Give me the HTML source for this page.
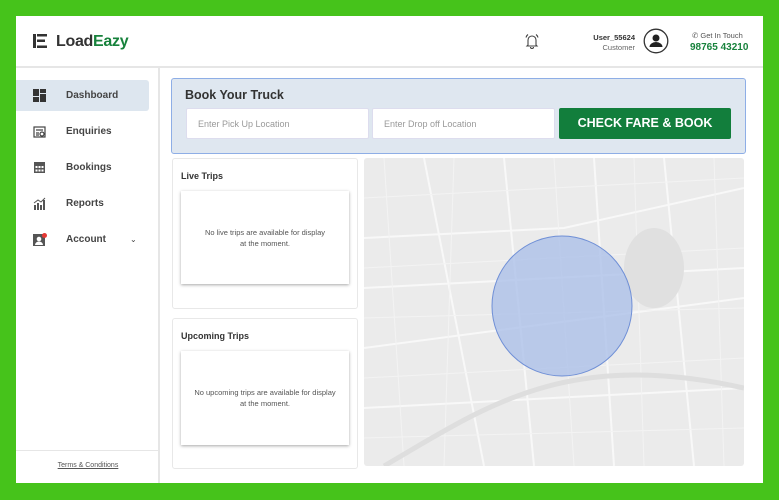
<!DOCTYPE html>
<html><head><meta charset="utf-8"><style>
*{margin:0;padding:0;box-sizing:border-box}
body{width:779px;height:500px;background:#46c31b;font-family:"Liberation Sans",Arial,sans-serif;position:relative;overflow:hidden}
.frame{position:absolute;left:16px;top:16px;width:747px;height:467px;background:#fff}
.hdr{position:absolute;left:0;top:0;width:747px;height:52px;border-bottom:2px solid #e6e6e6}
.side{position:absolute;left:0;top:52px;width:144px;height:415px;border-right:2px solid #e6e6e6}
.nav{position:absolute;left:0;width:133px;height:31px;display:flex;align-items:center;font-size:10px;font-weight:bold;color:#444}
.nav svg{position:absolute;left:17px}
.nav span{position:absolute;left:50px}
.abs{position:absolute}
.card{position:absolute;background:#fff;border:1px solid #e8e8e8;border-radius:3px}
.inner{position:absolute;background:#fff;box-shadow:0 1px 3px rgba(0,0,0,.35);font-size:7.5px;color:#555;text-align:center;line-height:11px;display:flex;align-items:center;justify-content:center}
</style></head><body>
<div class="frame">
 <div class="hdr">
  <svg class="abs" style="left:17px;top:18px" width="14" height="14" viewBox="0 0 14 14"><rect x="0" y="0" width="3" height="14" fill="#333"/><rect x="4" y="0" width="10" height="2.5" fill="#333"/><rect x="4" y="5.5" width="8" height="2.5" fill="#333"/><rect x="4" y="11.5" width="10" height="2.5" fill="#333"/></svg>
  <div class="abs" style="left:40px;top:17px;font-size:16px;font-weight:bold;color:#333;letter-spacing:-.3px">Load<span style="color:#17823c">Eazy</span></div>
  <svg class="abs" style="left:508px;top:17px" width="16" height="16" viewBox="0 0 16 16" fill="none" stroke="#444" stroke-width="1.1"><path d="M4 12V7a4 4 0 0 1 8 0v5l1 1H3z"/><path d="M6.5 14a1.5 1.5 0 0 0 3 0"/><path d="M2 4.5a5 5 0 0 1 2-3M14 4.5a5 5 0 0 0-2-3"/></svg>
  <div class="abs" style="right:128px;top:17px;font-size:7.5px;font-weight:bold;color:#333;text-align:right">User_55624</div>
  <div class="abs" style="right:128px;top:27px;font-size:7.5px;color:#666;text-align:right">Customer</div>
  <svg class="abs" style="left:627px;top:12px" width="26" height="26" viewBox="0 0 26 26"><circle cx="13" cy="13" r="11.8" fill="none" stroke="#333" stroke-width="1.3"/><circle cx="13" cy="10" r="3.5" fill="#222"/><path d="M6.5 19a6.5 5 0 0 1 13 0z" fill="#222"/></svg>
  <div class="abs" style="left:676px;top:15px;font-size:7.5px;color:#555">&#9990; Get In Touch</div>
  <div class="abs" style="left:674px;top:26px;font-size:10px;font-weight:bold;color:#17823c">98765 43210</div>
 </div>
 <div class="side">
  <div class="nav" style="top:12px;background:#dde6ef;border-radius:0 3px 3px 0"><svg width="13" height="13" viewBox="0 0 13 13" fill="#333"><rect x="0" y="0" width="6" height="7"/><rect x="7" y="0" width="6" height="4"/><rect x="0" y="8" width="6" height="5"/><rect x="7" y="5" width="6" height="8"/></svg><span>Dashboard</span></div>
  <div class="nav" style="top:48px"><svg width="13" height="13" viewBox="0 0 13 13" fill="none" stroke="#444" stroke-width="1.2"><rect x="1" y="2" width="11" height="10"/><path d="M3 5h7M3 8h3M3 10h3"/><circle cx="9" cy="9" r="2"/></svg><span>Enquiries</span></div>
  <div class="nav" style="top:84px"><svg width="13" height="13" viewBox="0 0 13 13" fill="#555"><rect x="1" y="1" width="11" height="11"/><g fill="#fff"><rect x="2.5" y="5" width="2" height="2"/><rect x="5.5" y="5" width="2" height="2"/><rect x="8.5" y="5" width="2" height="2"/><rect x="2.5" y="8.5" width="2" height="2"/><rect x="5.5" y="8.5" width="2" height="2"/><rect x="8.5" y="8.5" width="2" height="2"/></g></svg><span>Bookings</span></div>
  <div class="nav" style="top:120px"><svg width="13" height="13" viewBox="0 0 13 13" fill="#555"><rect x="1" y="8" width="2" height="5"/><rect x="4" y="6" width="2" height="7"/><rect x="7" y="8" width="2" height="5"/><rect x="10" y="3" width="2" height="10"/><path d="M1 6l4-3 3 2 4-4" stroke="#555" fill="none"/></svg><span>Reports</span></div>
  <div class="nav" style="top:156px"><svg width="14" height="14" viewBox="0 0 14 14"><rect x="0" y="1" width="12" height="12" fill="#555"/><circle cx="6" cy="6" r="2.3" fill="#fff"/><path d="M2 12a4 3.5 0 0 1 8 0z" fill="#fff"/><circle cx="11.5" cy="2.5" r="2.5" fill="#e53935"/></svg><span>Account</span><span style="left:114px;font-size:8px;font-weight:normal">&#8964;</span></div>
  <div class="abs" style="left:0;top:382px;width:144px;border-top:1px solid #e6e6e6"></div>
  <div class="abs" style="left:0;top:394px;width:144px;text-align:center;font-size:7px;color:#555;text-decoration:underline">Terms &amp; Conditions</div>
 </div>
 <div class="abs" style="left:155px;top:62px;width:575px;height:76px;background:#dfe7f0;border:1px solid #8eaee6;border-radius:3px">
  <div class="abs" style="left:13px;top:9px;font-size:12.5px;font-weight:bold;color:#333">Book Your Truck</div>
  <div class="abs" style="left:14px;top:29px;width:183px;height:31px;background:#fff;border:1px solid #dde;border-radius:2px;font-size:9px;color:#999;padding:10px 0 0 11px">Enter Pick Up Location</div>
  <div class="abs" style="left:200px;top:29px;width:183px;height:31px;background:#fff;border:1px solid #dde;border-radius:2px;font-size:9px;color:#999;padding:10px 0 0 11px">Enter Drop off Location</div>
  <div class="abs" style="left:387px;top:29px;width:172px;height:31px;background:#127e3c;border-radius:2px;font-size:12.5px;font-weight:bold;color:#fff;text-align:center;line-height:31px">CHECK FARE &amp; BOOK</div>
 </div>
 <div class="card" style="left:156px;top:142px;width:186px;height:151px">
  <div class="abs" style="left:8px;top:12px;font-size:9px;font-weight:bold;color:#333">Live Trips</div>
  <div class="inner" style="left:8px;top:32px;width:168px;height:93px">No live trips are available for display<br>at the moment.</div>
 </div>
 <div class="card" style="left:156px;top:302px;width:186px;height:151px">
  <div class="abs" style="left:8px;top:12px;font-size:9px;font-weight:bold;color:#333">Upcoming Trips</div>
  <div class="inner" style="left:8px;top:32px;width:168px;height:94px">No upcoming trips are available for display<br>at the moment.</div>
 </div>
 <svg class="abs" style="left:348px;top:142px;border-radius:3px" width="380" height="308" viewBox="0 0 380 308">
  <rect width="380" height="308" fill="#ebebeb"/>
  <g stroke="#f8f8f8" stroke-width="2" fill="none">
   <path d="M0 190L380 140M60 0L120 308M0 80L200 70L380 30M0 250L380 230M230 0L250 308M300 0L330 308M140 0L170 308M0 130L380 110"/>
  </g>
  <g stroke="#f3f3f3" stroke-width="1" fill="none">
   <path d="M0 40L380 20M20 0L40 308M90 0L80 308M190 0L210 308M270 0L280 308M350 0L360 308M0 220L380 200M0 280L380 270M0 160L380 150M0 110L380 90"/>
  </g>
  <path d="M20 308C120 250 200 190 380 230" stroke="#dedede" stroke-width="5" fill="none"/>
  <ellipse cx="290" cy="110" rx="30" ry="40" fill="#e0e0e0"/>
  <circle cx="198" cy="148" r="70" fill="#a8bde8" fill-opacity=".75" stroke="#6f8fd6" stroke-width="1"/>
 </svg>
</div>
</body></html>
